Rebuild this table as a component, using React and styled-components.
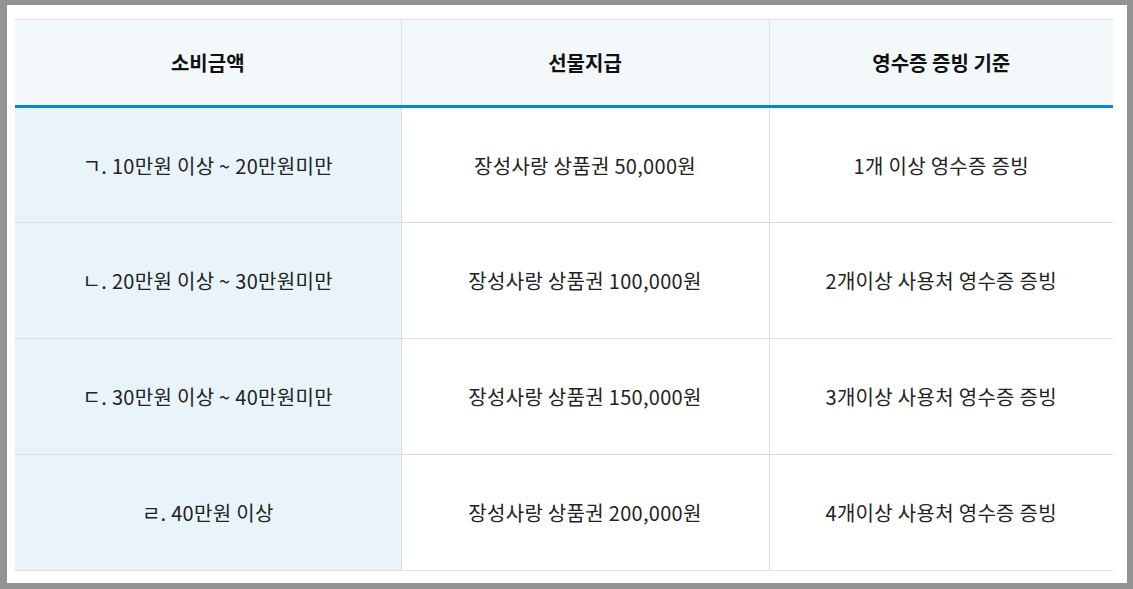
import React from 'react';
import styled, { createGlobalStyle } from 'styled-components';

const GlobalStyle = createGlobalStyle`
    html, body {
        margin: 0;
        padding: 0;
        background: #939393;
    }
    body {
        font-family: "Noto Sans CJK KR", "Noto Sans", sans-serif;
        color: #222;
    }
`

const Frame = styled.div`
    width: 1133px;
    height: 589px;
    box-sizing: border-box;
    padding: 5px 6px 6px 7px;
`

const Sheet = styled.div`
    background: #fff;
    height: 100%;
    box-sizing: border-box;
    padding: 14px 14px 0 8px;
`

const Table = styled.table`
    width: 100%;
    border-collapse: collapse;
    table-layout: fixed;
    border-top: 1px solid #dcdfe0;
`

const HeadCell = styled.th`
    height: 85px;
    background: #f3f9fa;
    font-size: 20px;
    font-weight: 700;
    color: #111;
    text-align: center;
    border-left: 1px solid #dcdfe0;
    border-bottom: 3px solid #0a86d8;
    padding: 0;
    &:first-child { border-left: none; }
`

const Row = styled.tr`
    height: 116px;
`

const Cell = styled.td`
    background: ${p => (p.$tint ? '#e8f4fa' : '#fff')};
    font-size: 20px;
    font-weight: 400;
    letter-spacing: 0.3px;
    color: #222;
    text-align: center;
    border-left: 1px solid #dcdfe0;
    border-bottom: 1px solid #dcdfe0;
    padding: 0;
    &:first-child { border-left: none; }
`

const rows = [
    ['ㄱ. 10만원 이상 ~ 20만원미만', '장성사랑 상품권 50,000원', '1개 이상 영수증 증빙'],
    ['ㄴ. 20만원 이상 ~ 30만원미만', '장성사랑 상품권 100,000원', '2개이상 사용처 영수증 증빙'],
    ['ㄷ. 30만원 이상 ~ 40만원미만', '장성사랑 상품권 150,000원', '3개이상 사용처 영수증 증빙'],
    ['ㄹ. 40만원 이상', '장성사랑 상품권 200,000원', '4개이상 사용처 영수증 증빙'],
];

const App = () => {
    return (
        <Frame>
            <GlobalStyle />
            <Sheet>
                <Table>
                    <colgroup>
                        <col style={{ width: 386 }} />
                        <col style={{ width: 368 }} />
                        <col />
                    </colgroup>
                    <thead>
                        <tr>
                            <HeadCell>소비금액</HeadCell>
                            <HeadCell>선물지급</HeadCell>
                            <HeadCell>영수증 증빙 기준</HeadCell>
                        </tr>
                    </thead>
                    <tbody>
                        {rows.map(r => (
                            <Row key={r[0]}>
                                <Cell $tint>{r[0]}</Cell>
                                <Cell>{r[1]}</Cell>
                                <Cell>{r[2]}</Cell>
                            </Row>
                        ))}
                    </tbody>
                </Table>
            </Sheet>
        </Frame>
    );
};

export default App;
